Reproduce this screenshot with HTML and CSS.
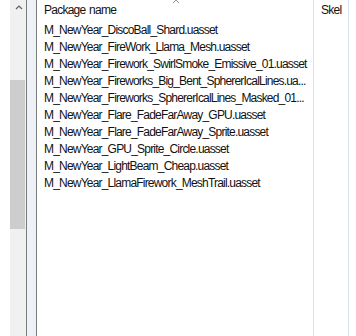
FILE: index.html
```html
<!DOCTYPE html>
<html lang="en">
  <head>
    <meta charset="UTF-8" />
    <title>Package list</title>
    <link rel="stylesheet" href="styles.css">
  </head>
  <body>
    <div class="window">
      <div class="gutter"></div>

      <!-- vertical scrollbar of the left pane -->
      <div class="scrollbar">
        <svg class="arrow" width="8" height="6" viewBox="0 0 8 6">
          <polyline points="1,5 4,2 7,5" fill="none" stroke="#606060" stroke-width="1.2" />
        </svg>
        <div class="thumb"></div>
      </div>

      <div class="splitter"></div>

      <div class="list">
        <div class="col col-name">
          <div class="head">
            Package name
            <svg class="sort" width="8" height="4" viewBox="0 0 8 4">
              <polyline points="1,4 4,1 7,4" fill="none" stroke="#9a9a9a" stroke-width="1" />
            </svg>
          </div>
          <ul class="rows">
            <li>M_NewYear_DiscoBall_Shard.uasset</li>
            <li>M_NewYear_FireWork_Llama_Mesh.uasset</li>
            <li>M_NewYear_Firework_SwirlSmoke_Emissive_01.uasset</li>
            <li>M_NewYear_Fireworks_Big_Bent_SphererIcalLines.ua...</li>
            <li>M_NewYear_Fireworks_SphererIcalLines_Masked_01...</li>
            <li>M_NewYear_Flare_FadeFarAway_GPU.uasset</li>
            <li>M_NewYear_Flare_FadeFarAway_Sprite.uasset</li>
            <li>M_NewYear_GPU_Sprite_Circle.uasset</li>
            <li>M_NewYear_LightBeam_Cheap.uasset</li>
            <li>M_NewYear_LlamaFirework_MeshTrail.uasset</li>
          </ul>
        </div>
        <div class="col col-skel">
          <div class="head">Skel</div>
        </div>
        <div class="col col-rest"></div>
      </div>
    </div>
  </body>
</html>
```

FILE: styles.css
```css
* {
  margin: 0;
  padding: 0;
  box-sizing: border-box;
}

body {
  width: 356px;
  height: 336px;
  background: #fff;
  font-family: 'Liberation Sans', Arial, sans-serif;
  font-size: 12px;
  color: #111;
  overflow: hidden;
}
.window {
  display: flex;
  height: 336px;
}
.gutter {
  width: 10px;
  background: #fff;
}
.scrollbar {
  width: 16px;
  background: #f0f0f0;
  display: flex;
  flex-direction: column;
  align-items: center;
}
.arrow {
  margin-top: 4px;
  margin-left: 1px;
}
.thumb {
  width: 15px;
  height: 149px;
  margin-top: 70px;
  margin-left: -1px;
  background: #cdcdcd;
}
.splitter {
  width: 11px;
  background: #eef2f6;
  border-left: 1px solid #7a7a7a;
  border-right: 1px solid #7a7a7a;
}
.list {
  flex: 1;
  display: flex;
  background: #fff;
}
.col {
  height: 100%;
}
.col-name {
  width: 277px;
  border-right: 1px solid #dbe4ee;
  overflow: hidden;
}
.col-skel {
  width: 35px;
  border-right: 1px solid #dbe4ee;
}
.col-rest {
  flex: 1;
}
.head {
  position: relative;
  height: 22px;
  padding: 3px 0 0 7px;
  line-height: 15px;
  letter-spacing: -0.75px;
  word-spacing: 1px;
  white-space: nowrap;
}
.sort {
  position: absolute;
  top: -1px;
  left: 135px;
}
.rows {
  list-style: none;
}
.rows li {
  height: 17px;
  line-height: 17px;
  padding-left: 7px;
  white-space: nowrap;
  letter-spacing: -0.8px;
  word-spacing: 1px;
}
```
